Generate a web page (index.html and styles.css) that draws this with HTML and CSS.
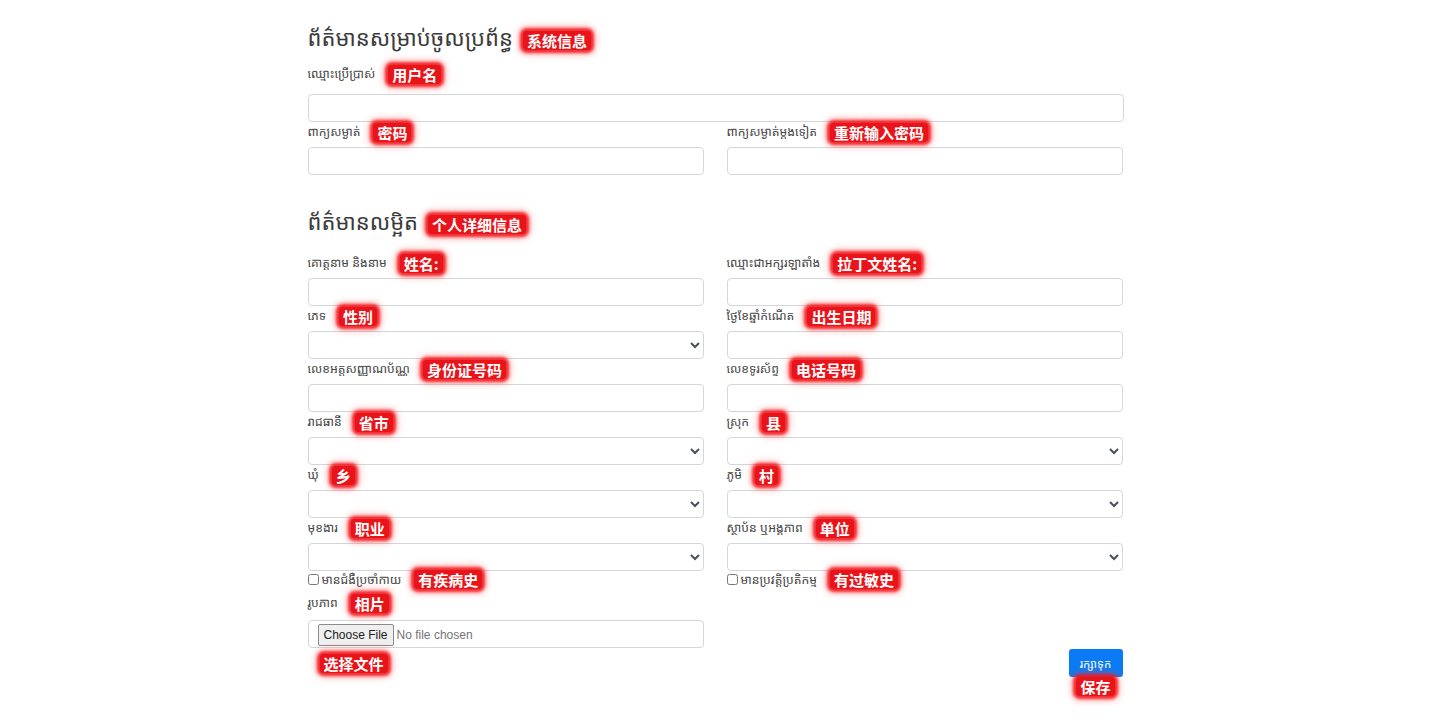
FILE: index.html
```html
<!DOCTYPE html>
<html lang="km">
<head>
<meta charset="utf-8">
<title>ចុះឈ្មោះ</title>
<link rel="stylesheet" href="styles.css">
</head>
<body>
<main class="page">
  <h4 class="section-title">ព័ត៌មានសម្រាប់ចូលប្រព័ន្ធ<span class="tag">系统信息</span></h4>
  <div class="field field-first">
    <label class="label">ឈ្មោះប្រើប្រាស់<span class="tag">用户名</span></label>
    <input class="control" type="text">
  </div>
  <div class="grid2">
    <div class="field">
      <label class="label">ពាក្យសម្ងាត់<span class="tag">密码</span></label>
      <input class="control" type="password">
    </div>
    <div class="field">
      <label class="label">ពាក្យសម្ងាត់ម្តងទៀត<span class="tag">重新输入密码</span></label>
      <input class="control" type="password">
    </div>
  </div>

  <h4 class="section-title section-two">ព័ត៌មានលម្អិត<span class="tag">个人详细信息</span></h4>
  <div class="grid2">
    <div class="field">
      <label class="label">គោត្តនាម និងនាម<span class="tag">姓名:</span></label>
      <input class="control" type="text">
    </div>
    <div class="field">
      <label class="label">ឈ្មោះជាអក្សរឡាតាំង<span class="tag">拉丁文姓名:</span></label>
      <input class="control" type="text">
    </div>
    <div class="field">
      <label class="label">ភេទ<span class="tag">性别</span></label>
      <select class="control"><option></option></select>
    </div>
    <div class="field">
      <label class="label">ថ្ងៃខែឆ្នាំកំណើត<span class="tag">出生日期</span></label>
      <input class="control" type="text">
    </div>
    <div class="field">
      <label class="label">លេខអត្តសញ្ញាណប័ណ្ណ<span class="tag">身份证号码</span></label>
      <input class="control" type="text">
    </div>
    <div class="field">
      <label class="label">លេខទូរស័ព្ទ<span class="tag">电话号码</span></label>
      <input class="control" type="text">
    </div>
    <div class="field">
      <label class="label">រាជធានី<span class="tag">省市</span></label>
      <select class="control"><option></option></select>
    </div>
    <div class="field">
      <label class="label">ស្រុក<span class="tag">县</span></label>
      <select class="control"><option></option></select>
    </div>
    <div class="field">
      <label class="label">ឃុំ<span class="tag">乡</span></label>
      <select class="control"><option></option></select>
    </div>
    <div class="field">
      <label class="label">ភូមិ<span class="tag">村</span></label>
      <select class="control"><option></option></select>
    </div>
    <div class="field">
      <label class="label">មុខងារ<span class="tag">职业</span></label>
      <select class="control"><option></option></select>
    </div>
    <div class="field">
      <label class="label">ស្ថាប័ន ឬអង្គភាព<span class="tag">单位</span></label>
      <select class="control"><option></option></select>
    </div>
    <div class="check-row">
      <input class="check" type="checkbox"><span class="check-text">មានជំងឺប្រចាំកាយ</span><span class="tag">有疾病史</span>
    </div>
    <div class="check-row">
      <input class="check" type="checkbox"><span class="check-text">មានប្រវត្តិប្រតិកម្ម</span><span class="tag">有过敏史</span>
    </div>
    <div class="field field-photo">
      <label class="label">រូបភាព<span class="tag">相片</span></label>
      <input class="control file" type="file">
    </div>
  </div>
  <div class="footer">
    <span class="tag tag-file">选择文件</span>
    <div class="save">
      <button class="btn" type="button">រក្សាទុក</button>
      <span class="tag">保存</span>
    </div>
  </div>
</main>
</body>
</html>
```
FILE: styles.css
```css
html, body {
  margin: 0;
  background: #ffffff;
}
body {
  font-family: "Noto Sans Khmer", "Khmer OS", "Khmer OS System", "Noto Sans", "Liberation Sans", sans-serif;
  color: #333333;
}
.tag {
  display: inline-block;
  vertical-align: middle;
  margin: -4px 0 -4px 13px;
  padding: 0 4px;
  line-height: 19px;
  border-radius: 4px;
  background: #e8141a;
  box-shadow: 0 0 3px 3px rgba(240, 20, 26, 0.85), 0 0 7px 4px rgba(255, 60, 60, 0.45);
  color: #ffffff;
  font-family: "Noto Sans CJK SC", sans-serif;
  font-size: 15px;
  font-weight: 700;
  letter-spacing: 0;
}
.page {
  width: 816px;
  margin: 0 auto;
  padding: 21px 0 20px 1px;
}
.section-title {
  margin: 0;
  font-size: 22px;
  font-weight: 400;
  line-height: 32px;
  height: 32px;
  color: #3a3a3a;
}
.section-title .tag {
  margin-left: 10px;
}
.section-two {
  margin-top: 30px;
  margin-bottom: 16px;
}
.label {
  display: block;
  font-size: 12.2px;
  line-height: 20px;
  height: 20px;
  margin-bottom: 5px;
  color: #444444;
  white-space: nowrap;
}
.field-first {
  margin-top: 11px;
}
.field-first .label {
  margin-bottom: 10px;
}
.control {
  display: block;
  box-sizing: border-box;
  width: 100%;
  height: 28px;
  margin: 0;
  padding: 0 8px;
  border: 1px solid #d3d7db;
  border-radius: 4px;
  background: #ffffff;
  font-family: "Liberation Sans", sans-serif;
  font-size: 13px;
  color: #495057;
}
.grid2 {
  display: grid;
  grid-template-columns: 396px 396px;
  column-gap: 23px;
}
.check-row {
  display: flex;
  align-items: center;
  height: 20px;
  margin-top: -2px;
  margin-bottom: 4px;
  font-size: 12.2px;
  color: #444444;
  white-space: nowrap;
}
.check {
  width: 11px;
  height: 11px;
  margin: 0 3px 0 0;
}
.field-photo .label {
  margin-bottom: 7px;
}
.file {
  padding: 3px 9px;
  color: #757575;
  font-size: 12px;
}
.file::file-selector-button {
  height: 22px;
  margin-right: 3px;
  padding: 0 5px;
  border: 1px solid #8a8a8a;
  border-radius: 2px;
  background: #efefef;
  color: #222222;
  font-family: "Liberation Sans", sans-serif;
  font-size: 12px;
}
.footer {
  display: flex;
  justify-content: space-between;
  align-items: flex-start;
  width: 815px;
}
.footer .tag-file {
  margin: 6px 0 0 12px;
}
.save {
  display: flex;
  flex-direction: column;
  align-items: center;
}
.btn {
  width: 54px;
  height: 28px;
  margin-top: 1px;
  padding: 0;
  border: 0;
  border-radius: 3px;
  background: #0a7bf5;
  color: #ffffff;
  font-family: inherit;
  font-size: 11.5px;
}
.save .tag {
  margin: 0;
}
```
